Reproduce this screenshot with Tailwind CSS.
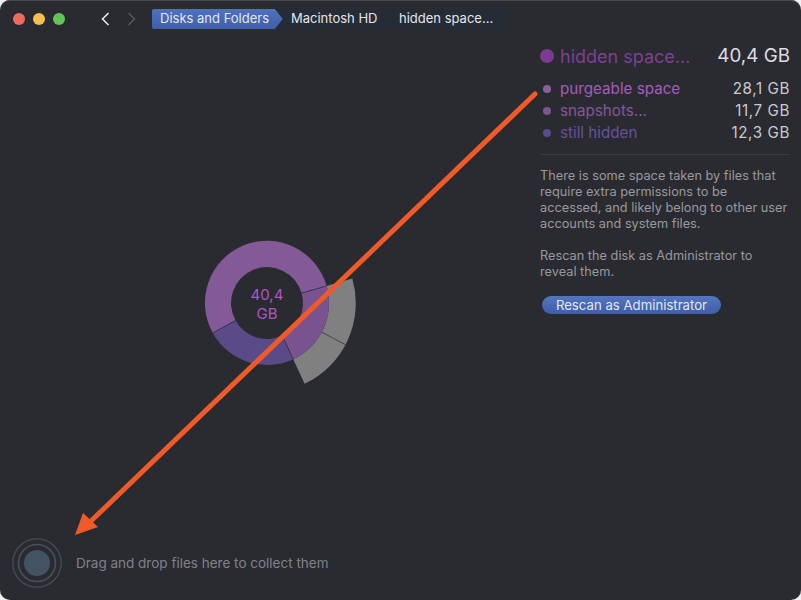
<!DOCTYPE html>
<html lang="en">
  <head>
    <meta charset="UTF-8" />
    <title>Disks and Folders</title>
    <script src="https://cdn.jsdelivr.net/npm/@tailwindcss/browser@4"></script>
  </head>
  <body class="bg-[#f0f0f0] w-[801px] h-[600px] overflow-hidden font-['Inter','Liberation_Sans',sans-serif]">
    <div class="relative w-[801px] h-[600px] bg-[#2a2b31] rounded-[10px] overflow-hidden flex flex-col shadow-[inset_0_1px_0_#47484d]">
      <!-- toolbar -->
      <div class="h-[38px] flex items-center shrink-0">
        <div class="flex items-center gap-[8px] ml-[13px]">
          <span class="w-3 h-3 rounded-full bg-[#ec6a5e]"></span>
          <span class="w-3 h-3 rounded-full bg-[#f4bf4f]"></span>
          <span class="w-3 h-3 rounded-full bg-[#61c554]"></span>
        </div>
        <div class="flex items-center gap-[17px] ml-[36px]">
          <svg width="9" height="14" viewBox="0 0 9 14" fill="none" stroke="#e8e8ea" stroke-width="1.6"><path d="M7.5 1L1.5 7l6 6" /></svg>
          <svg width="9" height="14" viewBox="0 0 9 14" fill="none" stroke="#55565c" stroke-width="1.6"><path d="M1.5 1l6 6-6 6" /></svg>
        </div>
        <div class="flex items-center h-[20px] ml-[16px] text-[13px] text-[#e4e5e8]">
          <div class="h-full w-[131px] pl-[8px] flex items-center bg-linear-to-b from-[#5072bd] to-[#3f5fa6] [clip-path:polygon(0_0,123px_0,131px_50%,123px_100%,0_100%)] rounded-l-[2px]">Disks and Folders</div>
          <div class="h-full w-[115px] -ml-[8px] pl-[16px] flex items-center bg-[#252c37] [clip-path:polygon(0_0,107px_0,115px_50%,107px_100%,0_100%,8px_50%)]">Macintosh HD</div>
          <div class="h-full w-[120px] -ml-[7px] pl-[16px] flex items-center bg-[#252c37] [clip-path:polygon(0_0,100%_0,100%_100%,0_100%,8px_50%)]">hidden space...</div>
        </div>
      </div>

      <div class="flex flex-1 min-h-0">
        <!-- chart column -->
        <div class="w-[540px] shrink-0 flex flex-col">
          <div class="flex-1 relative">
            <svg class="absolute left-[177px] top-[175px]" width="180" height="180" viewBox="-90 -90 180 180">
              <path d="M59.6-17.1L85.3-24.5A89 89 0 0 1 37.6 80.7L26.2 56.2A62 62 0 0 0 59.6-17.1Z" fill="#808080" />
              <path d="M54.7 29.1L78.6 41.8" stroke="#2a2b31" stroke-width="0.7" />
              <path d="M59.6-17.1A62 62 0 1 0-54.2 30L-31.5 17.5A36 36 0 1 1 34.6-9.9Z" fill="#835a97" />
              <path d="M59.6-17.1A62 62 0 0 1 26.2 56.2L15.2 32.6A36 36 0 0 0 34.6-9.9Z" fill="#78538f" />
              <path d="M26.2 56.2A62 62 0 0 1-54.2 30L-31.5 17.5A36 36 0 0 0 15.2 32.6Z" fill="#5a4b88" />
              <path d="M34.6-9.9L59.6-17.1M15.2 32.6L26.2 56.2M-31.5 17.5L-54.2 30" stroke="#2a2b31" stroke-width="0.7" />
            </svg>
            <div class="absolute left-[237px] top-[248px] w-[60px] text-center text-[15px] leading-[18.5px] text-[#ac58c4]">40,4<br />GB</div>
          </div>
          <div class="h-[50px] flex items-center shrink-0">
            <svg class="ml-[12px]" width="50" height="50" viewBox="0 0 50 50" fill="none">
              <circle cx="25" cy="25" r="24.2" stroke="#3f4752" stroke-width="1.6" />
              <circle cx="25" cy="25" r="18.5" stroke="#47505c" stroke-width="1.6" />
              <circle cx="25" cy="25" r="13" fill="#445364" />
            </svg>
            <span class="ml-[14px] text-[13.5px] text-[#7f828b]">Drag and drop files here to collect them</span>
          </div>
          <div class="h-[12px] shrink-0"></div>
        </div>

        <!-- details column -->
        <div class="flex-1 pr-[11px] pt-[5px]">
          <div class="flex items-center h-[26px]">
            <span class="w-[14px] h-[14px] rounded-full bg-[#7c3a90]"></span>
            <span class="ml-[6px] text-[18px] text-[#7e3f95]">hidden space...</span>
            <span class="ml-auto text-[18.8px] text-[#dcdde0]">40,4 GB</span>
          </div>
          <div class="mt-[9px] flex flex-col text-[15.2px] leading-[22px]">
            <div class="flex items-center">
              <span class="w-2 h-2 ml-[3px] rounded-full bg-[#8b5f9b]"></span>
              <span class="ml-[9px] text-[#a45cbc]">purgeable space</span>
              <span class="ml-auto tracking-[0.6px] text-[#c9cacd]">28,1 GB</span>
            </div>
            <div class="flex items-center">
              <span class="w-2 h-2 ml-[3px] rounded-full bg-[#7c5590]"></span>
              <span class="ml-[9px] text-[#84569a]">snapshots...</span>
              <span class="ml-auto tracking-[0.6px] text-[#c9cacd]">11,7 GB</span>
            </div>
            <div class="flex items-center">
              <span class="w-2 h-2 ml-[3px] rounded-full bg-[#5b4a8c]"></span>
              <span class="ml-[9px] text-[#64529b]">still hidden</span>
              <span class="ml-auto tracking-[0.6px] text-[#c9cacd]">12,3 GB</span>
            </div>
          </div>
          <div class="mt-[10px] border-t border-[#3a3b41]"></div>
          <p class="mt-[13px] text-[12.75px] leading-4 text-[#98999d] whitespace-nowrap">There is some space taken by files that<br />require extra permissions to be<br />accessed, and likely belong to other user<br />accounts and system files.</p>
          <p class="mt-4 text-[12.75px] leading-4 text-[#98999d] whitespace-nowrap">Rescan the disk as Administrator to<br />reveal them.</p>
          <button class="mt-[16px] ml-[2px] w-[179px] h-[18px] rounded-full bg-linear-to-b from-[#5475c0] to-[#3e5ea6] text-[13.2px] leading-[18px] text-[#e4e6ec]">Rescan as Administrator</button>
        </div>
      </div>

      <!-- annotation arrow over the window -->
      <svg class="absolute left-0 top-0 pointer-events-none" width="801" height="600" viewBox="0 0 801 600" fill="none">
        <path d="M535 94L90 522" stroke="#f05a28" stroke-width="5" stroke-linecap="round" />
        <path d="M75 535L83 513L98 527Z" fill="#f05a28" />
      </svg>
    </div>
  </body>
</html>
